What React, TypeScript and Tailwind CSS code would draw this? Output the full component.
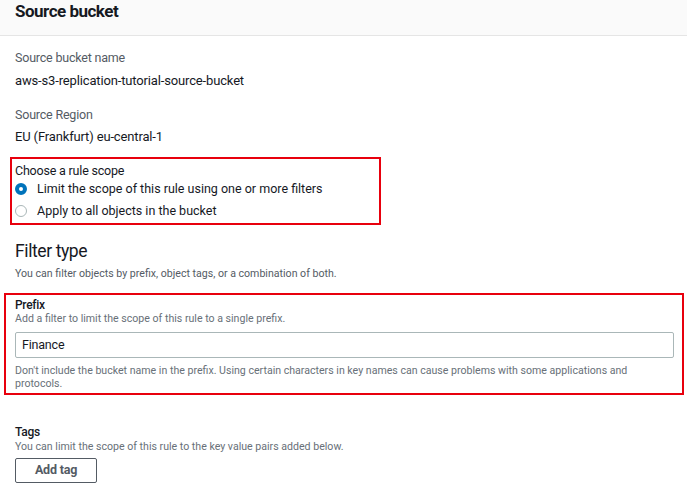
import React from 'react'

const App = () => {
    return (
        <div className="w-[687px] h-[495px] bg-white overflow-hidden font-['Roboto',sans-serif] text-[#16191f]">
            <div className="h-[36px] bg-[#fafafa] border-b border-[#e5e5e5] px-[15px] flex items-center">
                <h2 className="text-[17px] font-bold tracking-[-0.5px] leading-none -mt-[12px]">Source bucket</h2>
            </div>

            <div className="px-[15px] pt-[14px]">
                <div className="text-[12.5px] text-[#545b64] tracking-[-0.2px] leading-[16px]">Source bucket name</div>
                <div className="text-[13px] tracking-[-0.15px] leading-[16px] mt-[7px]">aws-s3-replication-tutorial-source-bucket</div>

                <div className="text-[12.5px] text-[#545b64] tracking-[-0.2px] leading-[16px] mt-[18px]">Source Region</div>
                <div className="text-[13px] tracking-[-0.15px] leading-[16px] mt-[6px]">EU (Frankfurt) eu-central-1</div>
            </div>

            <div className="ml-[10px] mt-[12px] w-[371px] border-2 border-[#e8000d] px-[3px] pt-[4px] pb-[2px]">
                <div className="text-[12.5px] tracking-[-0.2px] leading-[16px]">Choose a rule scope</div>
                <div className="flex items-center gap-[10px] h-[20px]">
                    <span className="w-[12px] h-[12px] rounded-full border-[4px] border-[#0073bb] bg-white shrink-0" />
                    <span className="text-[12.5px]">Limit the scope of this rule using one or more filters</span>
                </div>
                <div className="flex items-center gap-[10px] mt-[2px] h-[20px]">
                    <span className="w-[12px] h-[12px] rounded-full border border-[#aab7b8] bg-white shrink-0" />
                    <span className="text-[12.5px]">Apply to all objects in the bucket</span>
                </div>
            </div>

            <div className="px-[15px] mt-[15px]">
                <h3 className="text-[17.5px] tracking-[-0.4px] leading-[22px]">Filter type</h3>
                <p className="text-[10.6px] text-[#545b64] leading-[14px] mt-[5px]">You can filter objects by prefix, object tags, or a combination of both.</p>
            </div>

            <div className="ml-[4px] mt-[12px] w-[680px] border-2 border-[#e8000d] px-[9px] pt-[3px] pb-[3px]">
                <div className="text-[12px] font-medium tracking-[-0.3px] leading-[14px]">Prefix</div>
                <div className="text-[10.6px] text-[#687078] leading-[13px]">Add a filter to limit the scope of this rule to a single prefix.</div>
                <div className="mt-[7px] h-[26px] border border-[#aab7b8] rounded-[2px] flex items-center px-[6px] text-[12.5px] tracking-[-0.2px] w-[659px]">Finance</div>
                <p className="text-[10.6px] text-[#687078] leading-[13px] mt-[6px] w-[630px]">Don't include the bucket name in the prefix. Using certain characters in key names can cause problems with some applications and protocols.</p>
            </div>

            <div className="px-[15px] mt-[29px]">
                <div className="text-[12px] font-medium tracking-[-0.3px] leading-[16px]">Tags</div>
                <div className="text-[10.6px] text-[#687078] leading-[13px]">You can limit the scope of this rule to the key value pairs added below.</div>
                <button className="mt-[5px] w-[82px] h-[25px] border border-[#545b64] rounded-[2px] text-[12.5px] font-bold text-[#545b64] tracking-[-0.2px]">Add tag</button>
            </div>
        </div>
    )
}

export default App
